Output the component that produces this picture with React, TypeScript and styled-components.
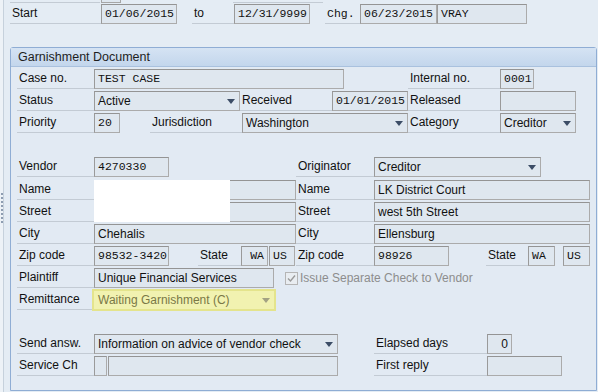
import React from "react";
import styled, { createGlobalStyle } from "styled-components";

const GlobalStyle = createGlobalStyle`
  html, body {
    margin: 0;
    padding: 0;
    background: #e4ecf4;
  }
  body {
    font-family: "Liberation Sans", Arial, sans-serif;
    font-size: 12px;
    color: #1a1a1a;
  }
`;

/* ------------ page frame ------------ */

const Screen = styled.div`
  width: 598px;
  height: 392px;
  overflow: hidden;
  display: flex;
  background: #e4ecf4;
`;

const Rail = styled.div`
  width: 3px;
  flex-shrink: 0;
  background: #edf2f7;
  border-right: 1px solid #c6d1dc;
  padding-top: 193px;
  box-sizing: content-box;
`;

const Content = styled.div`
  margin-left: 6px;
  width: 588px;
  display: flex;
  flex-direction: column;
`;

/* ------------ rows & cells ------------ */

const Stub = styled.div`
  display: flex;
  height: 3px;
  align-items: flex-end;
`;

const StubLine = styled.div<{ $w: number }>`
  width: ${(p) => p.$w}px;
  height: 1px;
  background: #c3cbd4;
  flex-shrink: 0;
`;

const StubBox = styled.div<{ $w: number }>`
  width: ${(p) => p.$w}px;
  height: 3px;
  box-sizing: border-box;
  border: 1px solid #a6a6a6;
  border-top: none;
  background: #dfe7ef;
  flex-shrink: 0;
`;

const Row = styled.div<{ $h?: number; $mt?: number }>`
  display: flex;
  align-items: center;
  height: ${(p) => p.$h ?? 22}px;
  margin-top: ${(p) => p.$mt ?? 0}px;
`;

const Gap = styled.div<{ $w: number }>`
  width: ${(p) => p.$w}px;
  flex-shrink: 0;
`;

const Label = styled.div<{ $w: number; $mono?: boolean }>`
  width: ${(p) => p.$w}px;
  height: 20px;
  flex-shrink: 0;
  box-sizing: border-box;
  padding-left: 2px;
  border-bottom: 1px solid #c3cbd4;
  line-height: 19px;
  white-space: nowrap;
  overflow: hidden;
  font-family: ${(p) =>
    p.$mono ? `"Liberation Mono", "Courier New", monospace` : "inherit"};
  font-size: ${(p) => (p.$mono ? "11.5px" : "12px")};
  color: #111;
`;

const Field = styled.div<{
  $w: number;
  $mono?: boolean;
  $right?: boolean;
}>`
  position: relative;
  width: ${(p) => p.$w}px;
  height: 20px;
  flex-shrink: 0;
  box-sizing: border-box;
  border: 1px solid #ababab;
  border-top-color: #949494;
  border-left-color: #9a9a9a;
  background: #dfe7ef;
  padding: 0 3px;
  line-height: 18px;
  white-space: nowrap;
  overflow: visible;
  text-align: ${(p) => (p.$right ? "right" : "left")};
  font-family: ${(p) =>
    p.$mono ? `"Liberation Mono", "Courier New", monospace` : "inherit"};
  font-size: ${(p) => (p.$mono ? "11.5px" : "12px")};
  color: #111;
`;

const Select = styled.div<{ $w: number; $hot?: boolean }>`
  width: ${(p) => p.$w}px;
  height: ${(p) => (p.$hot ? 22 : 20)}px;
  flex-shrink: 0;
  box-sizing: border-box;
  display: flex;
  align-items: center;
  justify-content: space-between;
  padding: 0 4px 0 3px;
  border: ${(p) => (p.$hot ? "2px solid #e4e48c" : "1px solid #ababab")};
  ${(p) => (p.$hot ? "" : "border-top-color: #949494; border-left-color: #9a9a9a;")}
  background: ${(p) => (p.$hot ? "#f1f2b0" : "#dfe7ef")};
  color: ${(p) => (p.$hot ? "#7a7846" : "#111")};
  font-size: 12px;
  white-space: nowrap;
  overflow: hidden;
  padding-left: ${(p) => (p.$hot ? 4 : 3)}px;
`;

const Arrow = styled.span<{ $muted?: boolean }>`
  width: 0;
  height: 0;
  flex-shrink: 0;
  border-left: 4px solid transparent;
  border-right: 4px solid transparent;
  border-top: 5px solid ${(p) => (p.$muted ? "#a3a283" : "#3c4d66")};
  margin-top: 1px;
`;

const Redaction = styled.div`
  position: absolute;
  left: -1px;
  top: -1px;
  width: 136px;
  height: 42px;
  background: #ffffff;
  z-index: 2;
`;

const Check = styled.div`
  width: 13px;
  height: 13px;
  flex-shrink: 0;
  box-sizing: border-box;
  border: 1px solid #b5b5b5;
  background: #e9edf1;
  display: flex;
  align-items: center;
  justify-content: center;
`;

const Muted = styled.span`
  padding-left: 2px;
  color: #8d8d8d;
  white-space: nowrap;
`;

/* ------------ group box ------------ */

const Group = styled.section`
  margin-top: 23px;
  width: 587px;
  height: 344px;
  box-sizing: border-box;
  border: 1px solid #8fadd4;
  border-radius: 3px 3px 0 0;
  display: flex;
  flex-direction: column;
  background: #e2eaf3;
`;

const GroupHeader = styled.header`
  height: 19px;
  flex-shrink: 0;
  box-sizing: border-box;
  padding-left: 7px;
  line-height: 18px;
  border-bottom: 1px solid #a9c1de;
  background: linear-gradient(#d5e3f3, #c3d6ec);
  color: #1e1e1e;
  font-size: 12.5px;
`;

const GroupBody = styled.div`
  padding: 1px 0 0 6px;
  display: flex;
  flex-direction: column;
`;

/* ------------ small drawings ------------ */

const Grip = () => (
  <svg width="4" height="30" style={{ display: "block" }}>
    {Array.from({ length: 8 }).map((_, i) => (
      <rect key={i} x="1" y={i * 4} width="2" height="2" fill="#8e9db1" />
    ))}
  </svg>
);

const Tick = () => (
  <svg width="9" height="9" viewBox="0 0 9 9">
    <path d="M1 4.5 L3.5 7 L8 1.5" fill="none" stroke="#9a9a9a" strokeWidth="1.4" />
  </svg>
);

const Drop = ({ w, text, hot }: { w: number; text: string; hot?: boolean }) => (
  <Select $w={w} $hot={hot}>
    <span>{text}</span>
    <Arrow $muted={hot} />
  </Select>
);

export default function App() {
  return (
    <>
      <GlobalStyle />
      <Screen>
        <Rail>
          <Grip />
        </Rail>
        <Content>
          <Stub>
            <StubLine $w={90} />
            <Gap $w={1} />
            <StubBox $w={20} />
            <Gap $w={112} />
            <StubLine $w={90} />
          </Stub>

          <Row $h={20} $mt={1}>
            <Label $w={91}>Start</Label>
            <Field $w={76} $mono>01/06/2015</Field>
            <Gap $w={15} />
            <Label $w={42}>to</Label>
            <Field $w={76} $mono>12/31/9999</Field>
            <Gap $w={15} />
            <Label $w={35} $mono>Chg.</Label>
            <Field $w={77} $mono>06/23/2015</Field>
            <Field $w={90} $mono>VRAY</Field>
          </Row>

          <Group>
            <GroupHeader>Garnishment Document</GroupHeader>
            <GroupBody>
              <Row>
                <Label $w={77}>Case no.</Label>
                <Field $w={250} $mono>TEST CASE</Field>
                <Gap $w={64} />
                <Label $w={92}>Internal no.</Label>
                <Field $w={34} $mono>0001</Field>
              </Row>
              <Row>
                <Label $w={77}>Status</Label>
                <Drop w={146} text="Active" />
                <Label $w={92}>Received</Label>
                <Field $w={76} $mono>01/01/2015</Field>
                <Label $w={92}>Released</Label>
                <Field $w={76} />
              </Row>
              <Row>
                <Label $w={77}>Priority</Label>
                <Field $w={26} $mono>20</Field>
                <Gap $w={30} />
                <Label $w={92}>Jurisdiction</Label>
                <Drop w={166} text="Washington" />
                <Label $w={92}>Category</Label>
                <Drop w={76} text="Creditor" />
              </Row>

              <Row $mt={22}>
                <Label $w={77}>Vendor</Label>
                <Field $w={75} $mono>4270330</Field>
                <Gap $w={127} />
                <Label $w={78}>Originator</Label>
                <Drop w={167} text="Creditor" />
              </Row>
              <Row $mt={1}>
                <Label $w={77}>Name</Label>
                <Field $w={202}>
                  <Redaction />
                </Field>
                <Label $w={78}>Name</Label>
                <Field $w={216}>LK District Court</Field>
              </Row>
              <Row>
                <Label $w={77}>Street</Label>
                <Field $w={202} />
                <Label $w={78}>Street</Label>
                <Field $w={216}>west 5th Street</Field>
              </Row>
              <Row>
                <Label $w={77}>City</Label>
                <Field $w={202}>Chehalis</Field>
                <Label $w={78}>City</Label>
                <Field $w={216}>Ellensburg</Field>
              </Row>
              <Row>
                <Label $w={77}>Zip code</Label>
                <Field $w={75} $mono>98532-3420</Field>
                <Gap $w={29} />
                <Label $w={43}>State</Label>
                <Field $w={27} $mono $right>WA</Field>
                <Gap $w={1} />
                <Field $w={26} $mono>US</Field>
                <Gap $w={1} />
                <Label $w={78}>Zip code</Label>
                <Field $w={75} $mono>98926</Field>
                <Gap $w={37} />
                <Label $w={42}>State</Label>
                <Field $w={27} $mono>WA</Field>
                <Gap $w={8} />
                <Field $w={27} $mono>US</Field>
              </Row>
              <Row>
                <Label $w={77}>Plaintiff</Label>
                <Field $w={180}>Unique Financial Services</Field>
                <Gap $w={11} />
                <Check>
                  <Tick />
                </Check>
                <Muted>Issue Separate Check to Vendor</Muted>
              </Row>
              <Row>
                <Label $w={75}>Remittance</Label>
                <Drop w={184} text="Waiting Garnishment (C)" hot />
              </Row>

              <Row $mt={22}>
                <Label $w={77}>Send answ.</Label>
                <Drop w={244} text="Information on advice of vendor check" />
                <Gap $w={36} />
                <Label $w={113}>Elapsed days</Label>
                <Field $w={25} $right>0</Field>
              </Row>
              <Row>
                <Label $w={77}>Service Ch</Label>
                <Field $w={13} />
                <Gap $w={1} />
                <Field $w={230} />
                <Gap $w={36} />
                <Label $w={113}>First reply</Label>
                <Field $w={75} />
              </Row>
            </GroupBody>
          </Group>
        </Content>
      </Screen>
    </>
  );
}
